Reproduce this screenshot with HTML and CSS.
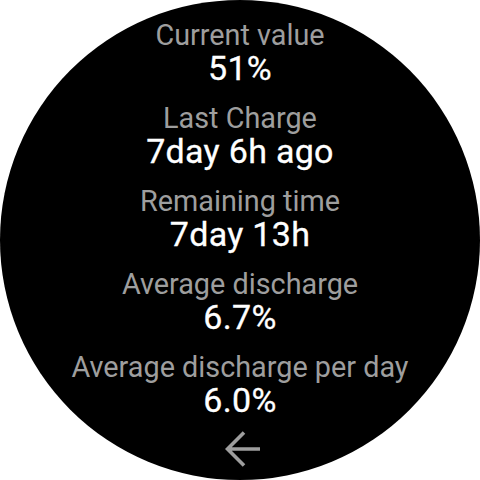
FILE: index.html
```html
<!DOCTYPE html>
<html>
<head>
<meta charset="utf-8">
<link rel="stylesheet" href="styles.css">
</head>
<body>
<div class="watch">
  <div class="item">
    <div class="label">Current value</div>
    <div class="value">51%</div>
  </div>
  <div class="item">
    <div class="label">Last Charge</div>
    <div class="value">7day 6h ago</div>
  </div>
  <div class="item">
    <div class="label">Remaining time</div>
    <div class="value">7day 13h</div>
  </div>
  <div class="item">
    <div class="label">Average discharge</div>
    <div class="value">6.7%</div>
  </div>
  <div class="item">
    <div class="label">Average discharge per day</div>
    <div class="value">6.0%</div>
  </div>
  <div class="back">
    <svg width="36" height="36" viewBox="0 0 36 36">
      <path d="M2 18H35M19 1.5L2.5 18L19 34.5" fill="none" stroke="#9e9e9e" stroke-width="3.6"/>
    </svg>
  </div>
</div>
</body>
</html>
```
FILE: styles.css
```css
html, body {
  margin: 0;
  padding: 0;
  background: #ffffff;
}
.watch {
  width: 480px;
  height: 480px;
  border-radius: 50%;
  background: #000000;
  overflow: hidden;
  display: flex;
  flex-direction: column;
  align-items: center;
  padding-top: 20px;
  box-sizing: border-box;
  gap: 17px;
  font-family: Roboto, "Noto Sans", sans-serif;
}
.item {
  display: flex;
  flex-direction: column;
  align-items: center;
}
.label {
  color: #9e9e9e;
  font-size: 28.8px;
  line-height: 30px;
}
.value {
  color: #ffffff;
  font-size: 34px;
  font-weight: 400;
  line-height: 36px;
  letter-spacing: 0.3px;
  -webkit-text-stroke: 0.3px #ffffff;
}
.back {
  margin-top: -4px;
  width: 36px;
  height: 36px;
  margin-left: 6px;
}
.back svg {
  display: block;
}
```
